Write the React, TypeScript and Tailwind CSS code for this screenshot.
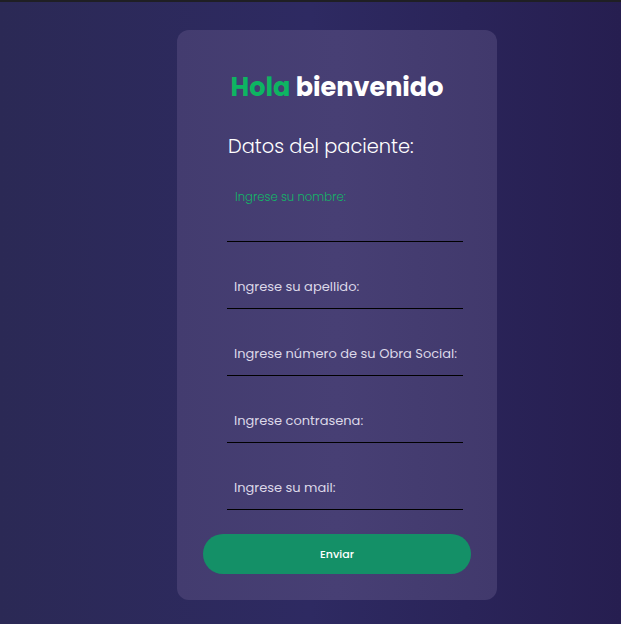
const fields = [
  "Ingrese su apellido:",
  "Ingrese número de su Obra Social:",
  "Ingrese contrasena:",
  "Ingrese su mail:",
];

export default function App() {
  return (
    <div className="min-h-[624px] border-t-2 border-[#1f1f24] bg-gradient-to-r from-[#2b2955] via-[#2e2a62] to-[#261e50] font-['Poppins','Open_Sans',sans-serif]">
      <div className="flex pt-[28px] pl-[177px]">
        <div className="w-[320px] h-[570px] rounded-xl bg-gradient-to-r from-[#433c6f] via-[#473f74] to-[#41396c] px-[26px] pt-[41px]">
          <h1 className="text-center text-[25.5px] leading-[32px] font-bold text-white">
            <span className="text-[#0db562]">Hola</span> bienvenido
          </h1>
          <h2 className="mt-[30px] pl-[25px] text-[19.4px] leading-[28px] font-light text-white">
            Datos del paciente:
          </h2>
          <div className="mt-[14px] ml-[24px] mr-[8px]">
            <div className="relative h-[67px] border-b border-black">
              <span className="absolute left-[8px] top-[14px] text-[11.7px] leading-[16px] font-light text-[#13b567]">
                Ingrese su nombre:
              </span>
            </div>
            {fields.map((f) => (
              <div
                key={f}
                className="flex h-[67px] items-end border-b border-black pb-[11px] pl-[7px]"
              >
                <span className="whitespace-nowrap text-[13px] leading-[20px] font-normal text-[#dcd8e8]">
                  {f}
                </span>
              </div>
            ))}
          </div>
          <button className="mt-[24px] flex h-[40px] w-full items-center justify-center rounded-[20px] bg-[#149067] text-[11px] font-medium text-white">
            Enviar
          </button>
        </div>
      </div>
    </div>
  );
}
